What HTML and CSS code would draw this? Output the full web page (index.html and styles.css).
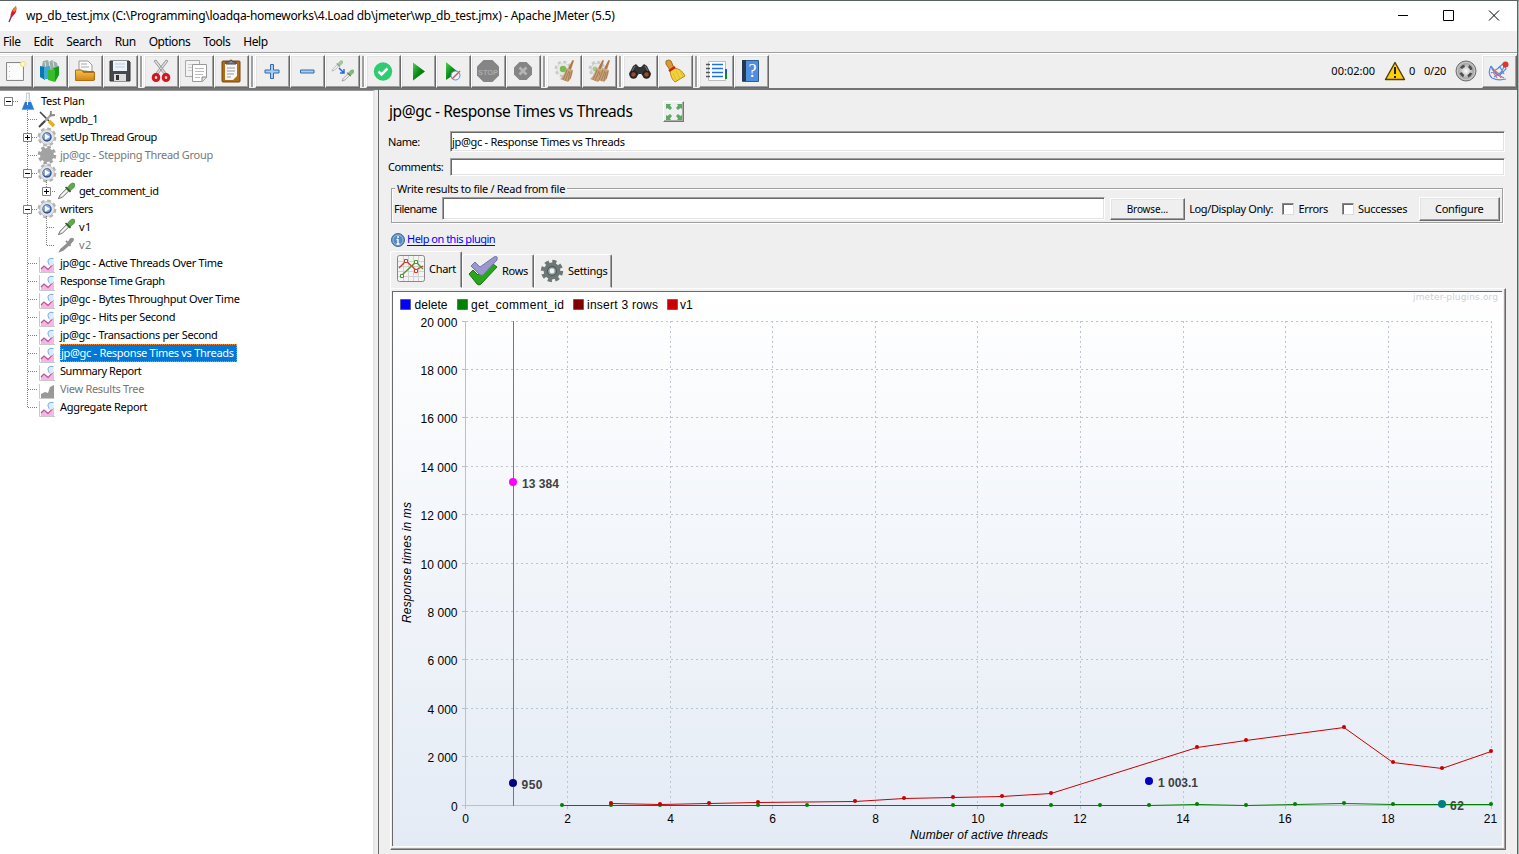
FILE: index.html
```html
<!DOCTYPE html>
<html lang="en">
<head>
<meta charset="utf-8">
<title>wp_db_test.jmx - Apache JMeter (5.5)</title>
<link rel="stylesheet" href="styles.css">
</head>
<body>
<svg class="defs" width="0" height="0">
<defs>
<linearGradient id="gold" x1="0" y1="0" x2="0" y2="1"><stop offset="0" stop-color="#f6c552"/><stop offset="1" stop-color="#cf8710"/></linearGradient>
<linearGradient id="play" x1="0" y1="0" x2="1" y2="1"><stop offset="0" stop-color="#4fd24f"/><stop offset=".5" stop-color="#0b8a16"/><stop offset="1" stop-color="#005c10"/></linearGradient>
<radialGradient id="ball"><stop offset="0" stop-color="#fff"/><stop offset="1" stop-color="#999"/></radialGradient>
<symbol id="gear" viewBox="0 0 20 20"><circle cx="10" cy="10" r="7.8" fill="none" stroke="currentColor" stroke-width="3" stroke-dasharray="3.4 2.727"/><circle cx="10" cy="10" r="7" fill="currentColor"/></symbol>
<symbol id="tgear" viewBox="0 0 20 20"><circle cx="10" cy="10" r="7.9" fill="none" stroke="#b2b2b2" stroke-width="3" stroke-dasharray="3.600 2.600"/><circle cx="10" cy="10" r="7.400" fill="#e4e4e4" stroke="#b5b5b5" stroke-width=".7"/><circle cx="10" cy="10" r="4.700" fill="#34558f"/><circle cx="9.700" cy="9.500" r="3.600" fill="#8cace0"/><path d="M8 6.800v6l5-3z" fill="#fff"/></symbol>
<symbol id="dropper" viewBox="0 0 20 20"><path d="M1.500 18.500l2-4 7-7 2.500 2.500-7 7z" fill="#e3e3e3" stroke="#666" stroke-width="1"/><path d="M5 15.500l6-6" stroke="#fff" stroke-width="1.200"/><path d="M11 7l3-4q3-3 5-1.500t0 4.500l-4.500 4z" fill="#62a950" stroke="#37732d" stroke-width=".6"/><path d="M9.500 5.500l5.500 5.500" stroke="#305529" stroke-width="1.800"/></symbol>
<symbol id="graph" viewBox="0 0 16 16"><path d="M.5 0v15.500H16" fill="none" stroke="#c8c8c8"/><path d="M2 15v-4l3-2 5 3 5-4v7z" fill="#f5b5e5"/><path d="M2 12l3-3 4 3.500L14.500 7" fill="none" stroke="#bb4f91" stroke-width="1.100"/><path d="M14.500 1.500q-6-1-5.500 3.500t5.500 3z" fill="#d9edff"/><path d="M14.500 1.500q-6-1-5.500 3.500 1 3 2 3.500" fill="none" stroke="#78aee8"/></symbol>
<symbol id="broom" viewBox="0 0 20 24"><path d="M15.500 1l1.500.5-3 9-3-1z" fill="#b07843"/><path d="M9 9q-1 7-6 11l8 3q4-3 5-12z" fill="#c9a27a"/><path d="M10 11L6 21m6-9l-4 10m5-9l-2 9m4-10l-2 8" stroke="#936f48" stroke-width=".7"/></symbol>
</defs>
</svg>
<div class="window">
<header class="titlebar">
  <svg class="feather" width="10" height="18" viewBox="0 0 10 18"><path d="M1 16l3-7" stroke="#643070" stroke-width="1.300"/><path d="M2.500 11Q2 5 8 0q2 6-4 11z" fill="#cf2038"/><path d="M4.500 5Q5 2 8 0q1 3-1 6z" fill="#ef7d24"/></svg>
  <span class="title">wp_db_test.jmx (C:\Programming\loadqa-homeworks\4.Load db\jmeter\wp_db_test.jmx) - Apache JMeter (5.5)</span>
  <svg class="winctl" width="110" height="14" viewBox="0 0 110 14"><path d="M4 7.500h10M49.500 2.500h10v10h-10zM95 2.500l10 10m0-10l-10 10" fill="none" stroke="#000"/></svg>
</header>
<nav class="menu"><span>File</span><span>Edit</span><span>Search</span><span>Run</span><span>Options</span><span>Tools</span><span>Help</span></nav>
<div class="toolbar">
  <div class="group">
    <button><svg viewBox="0 0 24 24"><path d="M3.500 3.500h17v18h-17z" fill="#f4f4f4" stroke="#888"/><path d="M5 5h14v15H5z" fill="#fcfcfc"/><path d="M6.500 7v12" stroke="#bbb" stroke-dasharray="1 4"/><circle cx="20" cy="5" r="2.500" fill="#fff9c8" stroke="#f0df70"/></svg></button>
    <button><svg viewBox="0 0 24 24"><path d="M4 7l1-5 5-1 1 2 3-2 5 3 1 4-3 6H6z" fill="#9aabab"/><path d="M7 3l1 7m3-8l1 7m3-7l1 6" stroke="#dce5e5"/><path d="M2 7l5 1v13l-5-3z" fill="#0879ad"/><path d="M6 8l6-1v13H6z" fill="#38aadb"/><path d="M10 11h7v12l-7-2z" fill="#38bc28"/><path d="M14 10l7-3v9l-4 7V11z" fill="#189a1b"/></svg></button>
    <button><svg viewBox="0 0 24 24"><path d="M6 11V2h9l4 4v7z" fill="#fafafa" stroke="#999"/><path d="M8 5h6M8 8h8" stroke="#aaa"/><path d="M3 12h18l1 3v6H3z" fill="#a9680c"/><path d="M2.500 11h6l2 2.500h11l-.5 8H2.500z" fill="url(#gold)" stroke="#af720e"/></svg></button>
    <button><svg viewBox="0 0 24 24"><path d="M2 2h19l1 1v19H2z" fill="#48494c" stroke="#333"/><path d="M5 2h14v10H5z" fill="#edf4fb"/><path d="M7 5h10M7 8h10" stroke="#c1ccd5"/><path d="M6 15h12v7H6z" fill="#ddd"/><path d="M8 16h3v5H8z" fill="#333"/></svg></button>
  </div>
  <div class="group">
    <button><svg viewBox="0 0 24 24"><path d="M5 2l10 13 2-1L7 1zM19 2L9 15l-2-1L17 1z" fill="#ddd" stroke="#999"/><ellipse cx="7" cy="18.500" rx="2.800" ry="3" fill="#f4dede" stroke="#d4161c" stroke-width="3"/><ellipse cx="17" cy="18.500" rx="2.800" ry="3" fill="#f4dede" stroke="#d4161c" stroke-width="3"/></svg></button>
    <button><svg viewBox="0 0 24 24"><path d="M1.500 1.500h14v16h-14z" fill="#f3f3f3" stroke="#aaa"/><path d="M4 5.500h8M4 8.500h8M4 11.500h8" stroke="#ccc"/><path d="M8.500 5.500h14v13l-4 4h-10z" fill="#fff" stroke="#999"/><path d="M11 9.500h9m-9 3h9m-9 3h8m-8 3h5" stroke="#bbb"/><path d="M18 22v-4h5" fill="#ddd" stroke="#888"/></svg></button>
    <button><svg viewBox="0 0 24 24"><rect x="3" y="2" width="18" height="21" rx="1" fill="#b16d15" stroke="#764410"/><path d="M6 5h12v12l-4 4H6z" fill="#f7f7f7"/><path d="M8 9h8m-8 3h8m-8 3h7m-7 3h4" stroke="#999"/><path d="M7 5V3h3q2-4 4 0h3v2z" fill="#888" stroke="#444"/></svg></button>
  </div>
  <div class="group">
    <button><svg viewBox="0 0 24 24"><path d="M10.500 5.500h3V11h5.500v3h-5.500v5.500h-3V14H5v-3h5.500z" fill="#a5d0f3" stroke="#356ba8"/></svg></button>
    <button><svg viewBox="0 0 24 24"><path d="M5.500 11h13.500v3H5.500z" fill="#a5d0f3" stroke="#356ba8"/></svg></button>
    <button><svg viewBox="0 0 24 24"><use href="#dropper" x="1" y="1" width="12" height="12" opacity=".55"/><use href="#dropper" x="11" y="10" width="13" height="13" opacity=".75"/><path d="M9 9l5 5m0-4v4h-4" stroke="#2866df" stroke-width="1.500" fill="none"/></svg></button>
  </div>
  <div class="group">
    <button><svg viewBox="0 0 24 24"><circle cx="12" cy="12.500" r="9.200" fill="#2dcc70"/><path d="M7.500 12.500l3 3 6-6" fill="none" stroke="#fff" stroke-width="2.500"/></svg></button>
    <button><svg viewBox="0 0 24 24"><path d="M7 3.500v18l12-9z" fill="url(#play)"/></svg></button>
    <button><svg viewBox="0 0 24 24"><path d="M5 3v18l12-8z" fill="url(#play)"/><circle cx="14.500" cy="16.500" r="4.500" fill="#ecf3fc" stroke="#5891cf"/><path d="M11 20l8-8" stroke="#cd5962" stroke-width="1.500"/></svg></button>
    <button><svg viewBox="0 0 24 24"><path d="M7.500 1h9L23 7.500v9L16.500 23h-9L1 16.500v-9z" fill="#858585"/><text x="12" y="15.500" textLength="20" lengthAdjust="spacingAndGlyphs" text-anchor="middle" class="stop">STOP</text></svg></button>
    <button><svg viewBox="0 0 24 24"><path d="M8.500 3h7L21 8.500v7L15.500 21h-7L3 15.500v-7z" fill="#858585"/><path d="M8.500 8.500l7 7m0-7l-7 7" stroke="#b5b5b5" stroke-width="2.600"/></svg></button>
  </div>
  <div class="group">
    <button><svg viewBox="0 0 24 24"><use href="#gear" x="2" y="1" width="18" height="18" color="#c9c9c9"/><circle cx="11" cy="10" r="6" fill="#e8e8e8"/><circle cx="11" cy="10" r="3.200" fill="#77bd4c"/><use href="#broom" x="5" y="0" width="20" height="24"/></svg></button>
    <button><svg viewBox="0 0 24 24"><use href="#gear" x="1" y="1" width="18" height="18" color="#c9c9c9"/><circle cx="10" cy="10" r="5.500" fill="#e8e8e8"/><circle cx="8" cy="10" r="2.500" fill="#9fcf84"/><use href="#broom" x="0" y="0" width="20" height="24"/><use href="#broom" x="6" y="0" width="20" height="24"/></svg></button>
  </div>
  <div class="group">
    <button><svg viewBox="0 0 24 24"><path d="M5 7l3-2 3 3h2l3-3 3 2 4 8-5 4-5-4h-2l-5 4-5-4z" fill="#343434"/><circle cx="5.500" cy="15.500" r="4.200" fill="#222"/><circle cx="18.500" cy="15.500" r="4.200" fill="#222"/><circle cx="5.500" cy="15.500" r="2.200" fill="#9c4c25"/><circle cx="18.500" cy="15.500" r="2.200" fill="#9c4c25"/><path d="M7 7l-3 5m13-5l3 5" stroke="#777"/></svg></button>
    <button><svg viewBox="0 0 24 24"><path d="M3 2q3-2 5 0l3 7-4 2-4-6z" fill="#d99c34" stroke="#a66b14"/><path d="M11 9q8 1 11 8l-10 6q-4-3-5-11z" fill="#f3d13b" stroke="#b68b10"/><path d="M6 12l6-4" stroke="#d31e1e" stroke-width="2.500"/><path d="M13 12l4 8m0-9l3 7m-10-4l3 7" stroke="#dcb52c" stroke-width=".8"/></svg></button>
  </div>
  <div class="group">
    <button><svg viewBox="0 0 24 24"><path d="M4.500 2.500h17v19h-17z" fill="#fff" stroke="#bbb"/><path d="M2 5.500h4m-4 4h4m-4 4h4m-4 4h4" stroke="#555" stroke-width="1.400"/><path d="M8 5.500h11M8 9.500h11M8 13.500h11M8 17.500h11" stroke="#1f70e8" stroke-width="1.300"/><path d="M21 10h2v5h-2z" fill="#1658e4"/><path d="M21 15h2v5h-2z" fill="#158b26"/></svg></button>
    <button><svg viewBox="0 0 24 24"><path d="M3.500 1.500h16v21h-16z" fill="#4f8fe0" stroke="#315a91"/><path d="M3 1h4v21H3z" fill="#24384e"/><text x="13.500" y="18" text-anchor="middle" class="q">?</text></svg></button>
  </div>
  <div class="status"><span class="time">00:02:00</span>
    <svg class="warn" width="22" height="20" viewBox="0 0 22 20"><path d="M11 1.500L20.500 18.500H1.500z" fill="#ffce0a" stroke="#4c3c08" stroke-width="1.400" stroke-linejoin="round"/><path d="M11 6v7m0 2v2" stroke="#222" stroke-width="2"/></svg>
    <span class="zero">0</span><span class="threads">0/20</span>
    <svg class="idle" width="22" height="22" viewBox="0 0 22 22"><circle cx="11" cy="11" r="10" fill="#b5b5b5" stroke="#6e6e6e"/><circle cx="11" cy="11" r="8.500" fill="url(#ball)" stroke="#ccc"/><circle cx="11" cy="11" r="5.500" fill="none" stroke="#4b4b4b" stroke-width="2.600" stroke-dasharray="4.300 4.339" stroke-dashoffset="-2.200"/></svg>
    <button><svg viewBox="0 0 24 24"><path d="M4 7q-4 8 1 12 6 3 14 1M4 7q2 8 13 12M7 18Q17 14 17 5M4 7l8 10M4 14l9-6 4 7M11 9l5-4 3 5-6 6" fill="none" stroke="#5b8cda" stroke-width="1.200"/><path d="M7 11l5 4 2 4m-8-6l4 6" stroke="#e46b75" stroke-width="1.300" fill="none"/><circle cx="18.500" cy="5.500" r="3" fill="#d8382d"/></svg></button>
  </div>
</div>
<main class="body">
<aside class="tree">
  <svg class="lines" width="60" height="326" viewBox="0 90 60 326"><path d="M27.500 108v299M13 101.500h6M28 119.500h9M28 137.500h9M28 155.500h9M28 173.500h9M28 209.500h9M28 263.500h9M28 281.500h9M28 299.500h9M28 317.500h9M28 335.500h9M28 353.500h9M28 371.500h9M28 389.500h9M28 407.500h9M46.500 180v11M50 191.500h6M46.500 216v29M47 227.500h8M47 245.500h8" fill="none" stroke="#808080" stroke-dasharray="1 1"/><g fill="#fff" stroke="#808080"><path d="M4.500 97.500h8v8h-8zM23.500 133.500h8v8h-8zM23.500 169.500h8v8h-8zM42.500 187.500h8v8h-8zM23.500 205.500h8v8h-8z"/></g><path d="M6 101.500h5M25 137.500h5M27.500 135v5M25 173.500h5M44 191.500h5M46.500 189v5M25 209.500h5" stroke="#000"/></svg>
  <div class="row l0"><svg viewBox="0 0 18 18"><path d="M7.500 1h3v6l4.500 10.500H3L7.500 7z" fill="#e3e7ea" stroke="#bbc3ca" stroke-width=".8"/><path d="M6 10h6l3 7.500H3z" fill="#2b7bd0"/><path d="M8.500 2v11" stroke="#fff"/></svg><span>Test Plan</span></div>
  <div class="row"><svg viewBox="0 0 18 18"><path d="M2 2l9 9" stroke="#444" stroke-width="1.600"/><path d="M3 15L14 4" stroke="#a6a6a6" stroke-width="2.300"/><path d="M1 17l6-6" stroke="#444" stroke-width="1.800"/><path d="M11 11l5 5" stroke="#e9ad24" stroke-width="3.500"/><path d="M13 1l-.5 4.500L17 5" stroke="#888" stroke-width="1.800" fill="none"/></svg><span>wpdb_1</span></div>
  <div class="row"><svg class="tg"><use href="#tgear"/></svg><span class="tight">setUp Thread Group</span></div>
  <div class="row off"><svg class="gray tg"><use href="#gear"/></svg><span>jp@gc - Stepping Thread Group</span></div>
  <div class="row"><svg class="tg"><use href="#tgear"/></svg><span>reader</span></div>
  <div class="row l2"><svg><use href="#dropper"/></svg><span class="tight">get_comment_id</span></div>
  <div class="row"><svg class="tg"><use href="#tgear"/></svg><span class="tight">writers</span></div>
  <div class="row l2"><svg><use href="#dropper"/></svg><span class="loose">v1</span></div>
  <div class="row l2 off"><svg viewBox="0 0 20 20"><path d="M1.500 18.500l2-4 8-7 3-5q4-2 4.500 2l-4 5-8 7z" fill="#909090"/><path d="M10 5.500l5 5.500" stroke="#909090" stroke-width="2"/></svg><span class="loose">v2</span></div>
  <div class="row g"><svg><use href="#graph"/></svg><span>jp@gc - Active Threads Over Time</span></div>
  <div class="row g"><svg><use href="#graph"/></svg><span class="tight">Response Time Graph</span></div>
  <div class="row g"><svg><use href="#graph"/></svg><span>jp@gc - Bytes Throughput Over Time</span></div>
  <div class="row g"><svg><use href="#graph"/></svg><span>jp@gc - Hits per Second</span></div>
  <div class="row g"><svg><use href="#graph"/></svg><span>jp@gc - Transactions per Second</span></div>
  <div class="row g"><svg><use href="#graph"/></svg><span class="sel">jp@gc - Response Times vs Threads</span></div>
  <div class="row g"><svg><use href="#graph"/></svg><span class="tight">Summary Report</span></div>
  <div class="row g off"><svg viewBox="0 0 16 16"><path d="M.5 1v14.500h15" fill="none" stroke="#ccc"/><path d="M2 15v-4l4-2 3 1 2-6 4-2v13z" fill="#999"/></svg><span>View Results Tree</span></div>
  <div class="row g"><svg><use href="#graph"/></svg><span>Aggregate Report</span></div>
</aside>
<section class="panel">
  <div class="heading"><h1>jp@gc - Response Times vs Threads</h1><div class="expand"><svg width="18" height="18" viewBox="0 0 18 18"><path d="M1 1h5L5 2.500 7 5 5 7 2.500 5 1 6zM17 1h-5l1 1.500L11 5l2 2 2.500-2L17 6zM1 17h5l-1-1.500L7 13l-2-2-2.500 2L1 12zM17 17h-5l1-1.500-2-2.500 2-2 2.500 2 1.500-1z" fill="#5aab60"/></svg></div></div>
  <div class="field name"><label>Name:</label><div class="input">jp@gc - Response Times vs Threads</div></div>
  <div class="field comments"><label>Comments:</label><div class="input"></div></div>
  <div class="filebox"><span class="legend">Write results to file / Read from file</span>
    <label>Filename</label><div class="input"></div><div class="btn browse">Browse...</div><span class="log">Log/Display Only:</span><i class="check"></i><span class="errors">Errors</span><i class="check"></i><span class="succ">Successes</span><div class="btn conf">Configure</div>
  </div>
  <div class="help"><svg width="14" height="14" viewBox="0 0 14 14"><circle cx="7" cy="7" r="6.500" fill="#5588bd" stroke="#416b9c"/><circle cx="7" cy="7" r="5" fill="none" stroke="#a9c6e4" stroke-width=".8"/><path d="M7 3v2m0 1v5M5.500 6.500H7M5.500 11h3" stroke="#fff" stroke-width="1.400"/></svg><a>Help on this plugin</a></div>
  <div class="tabs">
    <div class="tab active"><svg width="28" height="28" viewBox="0 0 28 28"><rect x=".5" y=".5" width="27" height="26" rx="2" fill="#f4f4f4" stroke="#888"/><path d="M6.500 1v25m5-25v25m5-25v25m5-25v25M1 6.500h26M1 11.500h26M1 16.500h26M1 21.500h26" stroke="#d1d1d1"/><path d="M2 13l7-7 10 9 7-4" fill="none" stroke="#d33a29" stroke-width="1.300"/><path d="M5 20L19 7l7 7" fill="none" stroke="#4b982e" stroke-width="1.300"/><path d="M7.500 4.500h3v3h-3zM17.500 14.500h3v3h-3z" fill="#fff" stroke="#d33a29"/><path d="M3.500 19.500h3v3h-3zM17.500 5.500h3v3h-3z" fill="#fff" stroke="#4b982e"/></svg><span>Chart</span></div>
    <div class="tab"><svg width="30" height="30" viewBox="0 0 30 30"><path d="M1 18l4-4 5 5L25 8l4 3-16 17q-2 2-4 0z" fill="#27a51b" stroke="#197414"/><path d="M3 10l4-4 5 5L26 1q4-2 3 3L15 19q-2 1-4-1z" fill="#9898cc" stroke="#7373a9"/></svg><span>Rows</span></div>
    <div class="tab"><svg width="24" height="24" viewBox="0 0 20 20"><use href="#gear" color="#6c7776"/><circle cx="10" cy="10" r="3.700" fill="#9aa3a3" stroke="#4d5655"/><circle cx="10" cy="10" r="2" fill="#f2f2f2"/></svg><span>Settings</span></div>
  </div>
  <div class="chartbox">
    <svg class="chart" width="1109" height="554" viewBox="393 292 1109 554">
      <defs><linearGradient id="bg" x1="0" y1="0" x2="0" y2="1"><stop offset="0" stop-color="#fff"/><stop offset="1" stop-color="#e4ebf5"/></linearGradient></defs>
      <rect x="393" y="292" width="1109" height="554" fill="url(#bg)"/>
      <g stroke="#333" stroke-opacity=".5"><path d="M400.500 299.500h10v10h-10z" fill="#00f"/><path d="M457.500 299.500h10v10h-10z" fill="#008000"/><path d="M573.500 299.500h10v10h-10z" fill="#800000"/><path d="M667.500 299.500h10v10h-10z" fill="#c80000"/></g>
      <g class="ct"><text x="414.500" y="309" textLength="33">delete</text><text x="471" y="309" textLength="93">get_comment_id</text><text x="587" y="309" textLength="71">insert 3 rows</text><text x="680" y="309">v1</text></g>
      <text class="mark" x="1413" y="300" textLength="85">jmeter-plugins.org</text>
      <path class="grid" d="M466 321.500h1025M466 369.500h1025M466 417.500h1025M466 466.500h1025M466 514.500h1025M466 563.500h1025M466 611.500h1025M466 659.500h1025M466 708.500h1025M466 756.500h1025M567.500 321v484M670.500 321v484M772.500 321v484M875.500 321v484M977.500 321v484M1080.500 321v484M1183.500 321v484M1285.500 321v484M1388.500 321v484M1491.500 321v484"/>
      <path d="M465.500 321v488M462 805.500h1029M462 321.500h4M462 369.500h4M462 417.500h4M462 466.500h4M462 514.500h4M462 563.500h4M462 611.500h4M462 659.500h4M462 708.500h4M462 756.500h4M567.500 805v4M670.500 805v4M772.500 805v4M875.500 805v4M977.500 805v4M1080.500 805v4M1183.500 805v4M1285.500 805v4M1388.500 805v4M1491.500 805v4" stroke="#b9c0cf" fill="none"/>
      <g class="ct"><text x="420.500" y="327" textLength="37">20 000</text><text x="420.500" y="375" textLength="37">18 000</text><text x="420.500" y="423" textLength="37">16 000</text><text x="420.500" y="472" textLength="37">14 000</text><text x="420.500" y="520" textLength="37">12 000</text><text x="420.500" y="569" textLength="37">10 000</text><text x="427.500" y="617" textLength="30">8 000</text><text x="427.500" y="665" textLength="30">6 000</text><text x="427.500" y="714" textLength="30">4 000</text><text x="427.500" y="762" textLength="30">2 000</text><text x="451" y="811">0</text></g>
      <g class="ct mid"><text x="465.500" y="823">0</text><text x="567.500" y="823">2</text><text x="670.500" y="823">4</text><text x="772.500" y="823">6</text><text x="875.500" y="823">8</text><text x="978" y="823">10</text><text x="1080" y="823">12</text><text x="1183" y="823">14</text><text x="1285" y="823">16</text><text x="1388" y="823">18</text><text x="1490.500" y="823">21</text></g>
      <text class="axis" x="910" y="839" textLength="138">Number of active threads</text>
      <text class="axis" transform="translate(411 623) rotate(-90)" textLength="121">Response times in ms</text>
      <path d="M513.500 321v485" stroke="#777"/>
      <path d="M562 805.500h587L1197 804.500 1246 805.500 1295 804.500 1344 803.500 1393 804.500H1491" fill="none" stroke="#008000"/>
      <path d="M611 803.500L660 804.500 709 803.500 758 802.500 855 801.500 904 798.500 953 797.500 1002 796.500 1051 793.500 1197 747.500 1246 740.500 1344 727.500 1393 762.500 1442 768.500 1491 751.500" fill="none" stroke="#c80000"/>
      <g fill="#008000"><circle cx="562" cy="805" r="2"/><circle cx="611" cy="805" r="2"/><circle cx="660" cy="805" r="2"/><circle cx="758" cy="805" r="2"/><circle cx="807" cy="805" r="2"/><circle cx="953" cy="805" r="2"/><circle cx="1002" cy="805" r="2"/><circle cx="1051" cy="805" r="2"/><circle cx="1100" cy="805" r="2"/><circle cx="1149" cy="805" r="2"/><circle cx="1197" cy="804" r="2"/><circle cx="1246" cy="805" r="2"/><circle cx="1295" cy="804" r="2"/><circle cx="1344" cy="803" r="2"/><circle cx="1393" cy="804" r="2"/><circle cx="1491" cy="804" r="2"/></g>
      <g fill="#c80000"><circle cx="611" cy="803" r="2"/><circle cx="660" cy="804" r="2"/><circle cx="709" cy="803" r="2"/><circle cx="758" cy="802" r="2"/><circle cx="855" cy="801" r="2"/><circle cx="904" cy="798" r="2"/><circle cx="953" cy="797" r="2"/><circle cx="1002" cy="796" r="2"/><circle cx="1051" cy="793" r="2"/><circle cx="1197" cy="747" r="2"/><circle cx="1246" cy="740" r="2"/><circle cx="1344" cy="727" r="2"/><circle cx="1393" cy="762" r="2"/><circle cx="1442" cy="768" r="2"/><circle cx="1491" cy="751" r="2"/></g>
      <circle cx="513" cy="482" r="4" fill="#f0f"/><circle cx="513" cy="783" r="4" fill="#000080"/><circle cx="1149" cy="781" r="4" fill="#0000c0"/><circle cx="1442" cy="804" r="4" fill="#008080"/>
      <g class="val"><text x="522" y="488" textLength="37">13 384</text><text x="521.500" y="789" textLength="21">950</text><text x="1158" y="787" textLength="40">1 003.1</text><text x="1450" y="810" textLength="14">62</text></g>
      <path d="M1446 804.500h20" stroke="#008000"/>
    </svg>
  </div>
</section>
</main>
</div>
</body>
</html>
```
FILE: styles.css
```css
* { box-sizing: border-box; }
body { margin: 0; width: 1519px; height: 854px; overflow: hidden; background: #efefef; color: #000; font: 11px/14px "Noto Sans", sans-serif; letter-spacing: -.3px; white-space: nowrap; }
.defs { position: absolute; }
.window { width: 1519px; height: 854px; display: flex; flex-direction: column; border-top: 1px solid #5b6161; border-right: 1px solid #a9bcb4; box-shadow: inset -1px 0 #5b6161; }
.titlebar { height: 30px; background: #fff; display: flex; align-items: center; padding: 0 13px 0 8px; margin-right: 1px; }
.feather { margin-top: -3px; }
.title { margin-left: 8px; font-size: 12px; letter-spacing: -.28px; }
.winctl { margin-left: auto; margin-top: -3px; }
.menu { height: 21px; display: flex; align-items: center; gap: 13px; padding-left: 3px; font-size: 12px; letter-spacing: -.43px; }
.toolbar { height: 38px; border-top: 1px solid #a0a0a0; border-bottom: 2px solid #747474; display: flex; gap: 6px; padding-top: 2px; margin-right: 1px; box-shadow: inset 0 1px #fff; }
.group { display: flex; position: relative; height: 33px; }
.group:first-child { margin-left: -2px; }
.group + .group::before { content: ""; position: absolute; left: -4px; top: 1px; width: 2px; height: 31px; background: #a0a0a0; border-right: 1px solid #fff; }
button, .btn { border: 1px solid; border-color: #fff #696969 #696969 #fff; box-shadow: inset -1px -1px #a0a0a0, inset 1px 1px #e3e3e3; background: #efefef; display: flex; align-items: center; justify-content: center; padding: 0; }
button { width: 35px; height: 33px; flex: none; }
button svg { width: 24px; height: 24px; margin: -2px 2px 0 0; }
.stop { font: bold 8px "Liberation Sans", sans-serif; fill: #aaa; letter-spacing: 0; }
.q { font: 18px "Liberation Serif", serif; fill: #fff; }
.status { margin-left: auto; display: flex; align-items: center; height: 33px; letter-spacing: 0; }
.status > :not(button) { position: relative; top: -1px; left: 1px; }
.time { margin-right: 9px; }
.zero { margin-left: 3px; width: 15px; }
.threads { width: 31px; letter-spacing: -.2px; }
.idle { margin-right: 6px; }
.body { flex: 1; min-height: 0; display: flex; }
.tree { width: 375px; background: #fff; position: relative; border-top: 1px solid #999; border-right: 2px solid #e6e6e6; padding-top: 1px; }
.lines { position: absolute; left: 0; top: -1px; }
.row { height: 18px; display: flex; align-items: center; padding-left: 38px; }
.row svg { width: 18px; height: 18px; margin-right: 4px; flex: none; }
.row svg.tg { width: 20px; height: 20px; margin: 0 3px 0 -1px; }
.row svg.gray { color: #a2a2a2; }
.row.l0 { padding-left: 19px; }
.row.l2 { padding-left: 57px; }
.row.g svg { width: 16px; height: 16px; margin: 3px 5px 0 1px; }
.tight { letter-spacing: -.45px; }
.loose { letter-spacing: .3px; }
.off { color: #777; }
.sel { background: #0078d7; color: #fff; height: 18px; line-height: 16px; border: 1px dotted #ff8728; padding-right: 2px; margin-left: 0; }
.panel { margin-left: 3px; width: 1139px; border-left: 1px solid #696969; padding: 10px 0 0 9px; display: flex; flex-direction: column; }
.heading { display: flex; align-items: center; height: 24px; margin-top: -1px; padding-left: 1px; }
h1 { margin: 0; width: 274px; font-size: 15.500px; font-weight: 400; line-height: 22px; letter-spacing: -.42px; }
.expand { width: 21px; height: 21px; border: 1px solid; border-color: #fff #777 #777 #fff; box-shadow: inset -1px -1px #aaa; padding: 1px; }
.field { display: flex; align-items: center; width: 1117px; }
.field label { width: 62px; letter-spacing: -.45px; }
.name { margin-top: 8px; height: 21px; }
.comments { margin-top: 6px; height: 18px; }
.input { flex: 1; height: 100%; background: #fff; border: 1px solid; border-color: #a0a0a0 #fff #fff #a0a0a0; box-shadow: inset 1px 1px #696969, inset -1px -1px #e3e3e3; padding: 3px 1px; }
.filebox { position: relative; margin: 12px 0 0 3px; width: 1112px; height: 35px; border: 1px solid #a0a0a0; box-shadow: 1px 1px #fff, inset 1px 1px #fff; display: flex; align-items: center; padding: 6px 2px 0 2px; }
.filebox label { width: 48px; letter-spacing: -.55px; }
.filebox .input { flex: none; width: 663px; height: 23px; }
.legend { position: absolute; left: 3px; top: -7px; background: #efefef; padding: 0 2px; }
.btn { height: 22px; }
.browse { width: 76px; margin-left: 5px; font-size: 10px; letter-spacing: -.15px; }
.conf { width: 82px; height: 24px; }
.log { width: 94px; margin-left: 4px; letter-spacing: -.38px; }
.check { width: 12px; height: 12px; background: #fff; border: 1px solid; border-color: #888 #ddd #ddd #888; box-shadow: inset 1px 1px #696969; margin-right: 4px; }
.errors { width: 44px; }
.succ { width: 61px; letter-spacing: -.25px; }
.help { display: flex; align-items: center; height: 17px; margin: 7px 0 0 3px; }
.help svg { margin-top: 2px; }
.help a { color: #00f; margin-left: 2px; border-bottom: 1px solid #00f; line-height: 13px; letter-spacing: -.5px; }
.tabs { height: 38px; display: flex; align-items: flex-end; margin: 3px 0 0 2px; }
.tab { height: 34px; display: flex; align-items: center; gap: 4px; border: 1px solid; border-color: #fff #696969 transparent #fff; box-shadow: inset -1px 0 #a0a0a0; border-radius: 3px 2px 0 0; width: 72px; padding-left: 5px; }
.tab.active { height: 37px; width: 72px; padding-left: 6px; padding-bottom: 1px; }
.tab:last-child { width: 78px; padding-left: 5px; }
.chartbox { width: 1116px; height: 562px; margin-left: 2px; border: 1px solid; border-color: #fff #696969 #696969 #fff; box-shadow: inset -1px -1px #a0a0a0; padding: 2px 3px 3px 1px; }
.chart { display: block; box-sizing: content-box; border-top: 1px solid #696969; border-left: 1px solid #696969; box-shadow: 1px 1px #fff; letter-spacing: 0; }
.ct, .val { font: 12px "Liberation Sans", sans-serif; }
.mid { text-anchor: middle; }
.grid { fill: none; stroke: #bdc3cf; stroke-dasharray: 2 3; }
.axis { font: italic 12px "Liberation Sans", sans-serif; }
.val { font-weight: bold; fill: #404040; }
.mark { font: 9px "DejaVu Sans", sans-serif; fill: #cdd1d8; }
```
